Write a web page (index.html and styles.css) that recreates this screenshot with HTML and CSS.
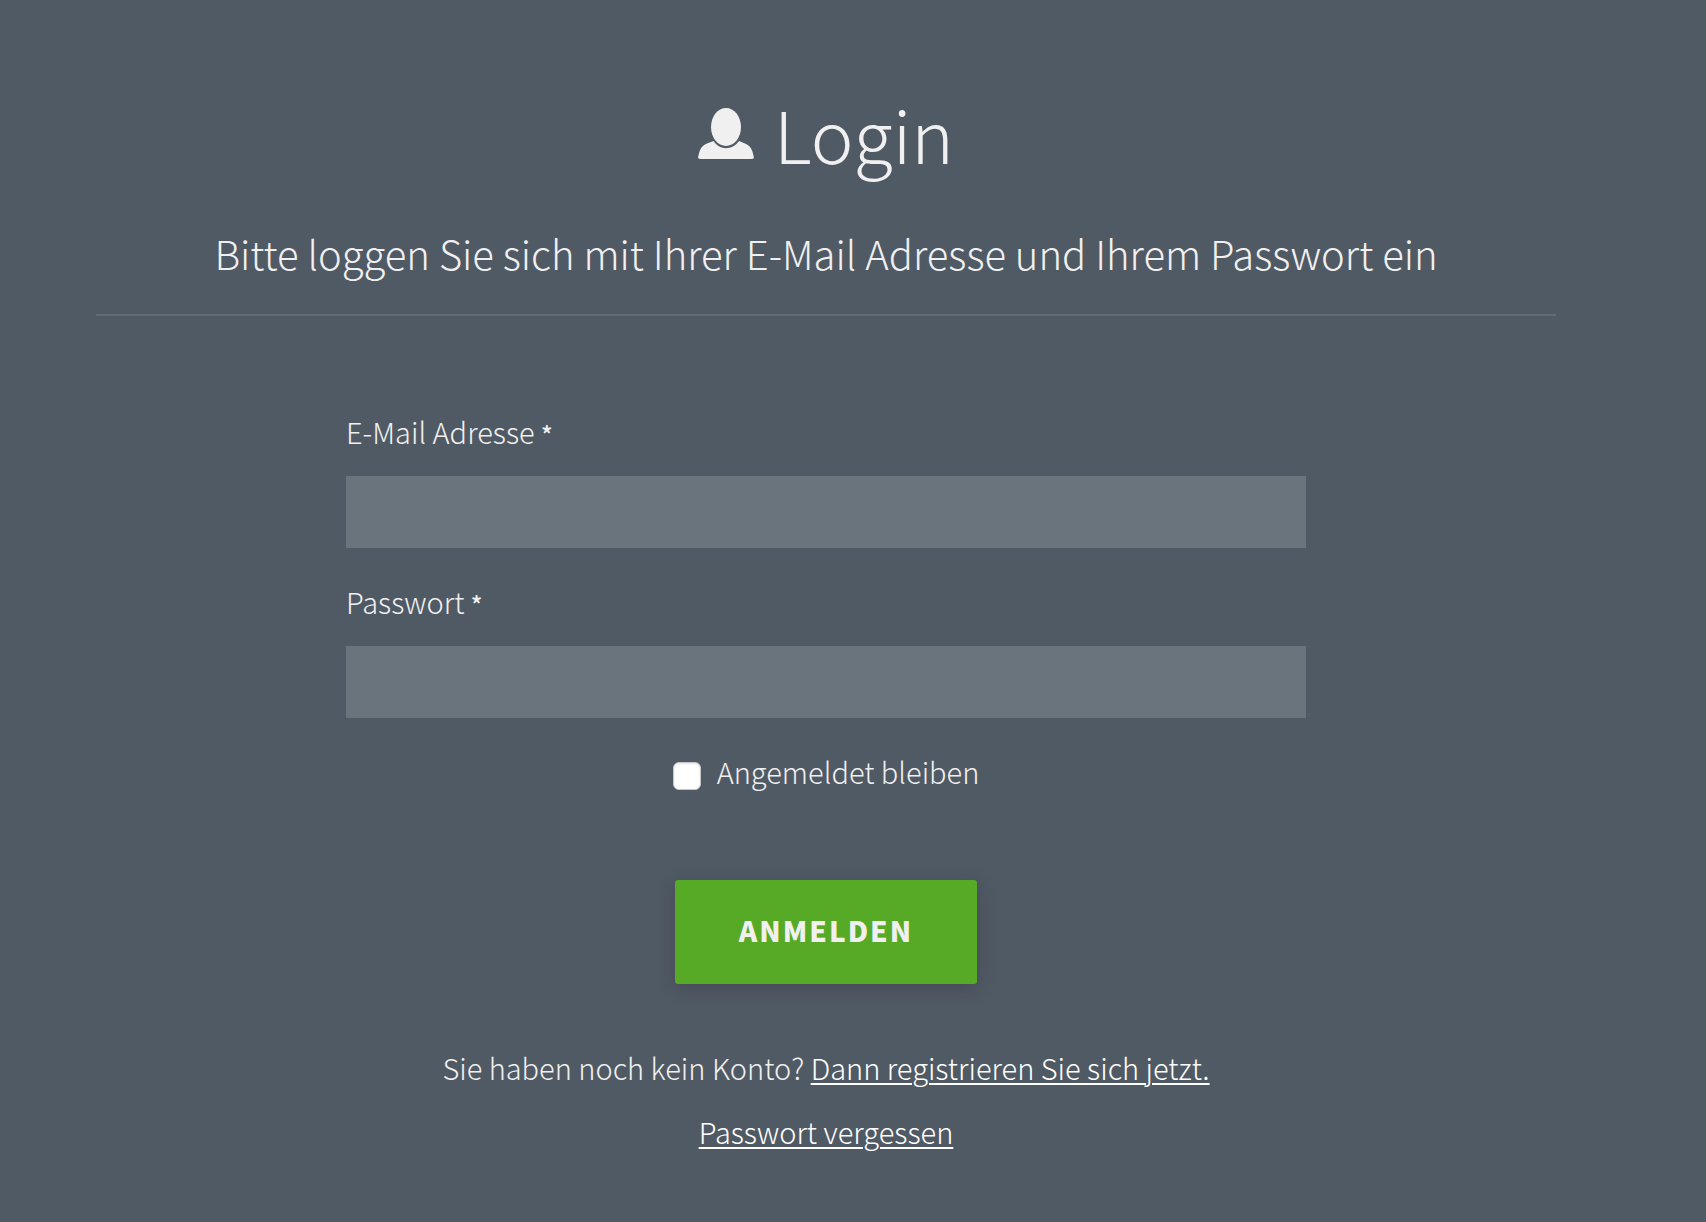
FILE: index.html
```html
<!DOCTYPE html>
<html lang="de">
<head>
<meta charset="utf-8">
<meta name="viewport" content="width=device-width, initial-scale=1">
<title>Login</title>
<link rel="stylesheet" href="styles.css">
</head>
<body>
<main class="page">
  <header class="intro">
    <h1 class="title">
      <svg class="user-icon" viewBox="0 0 56 52" aria-hidden="true">
        <ellipse cx="28" cy="19" rx="15" ry="19"/>
        <path d="M15.500 33C19 38 23.500 40.200 28 40.200S37.500 38 41 33L47 35.500C53 38 54.500 42 56 50Q55 51 53 51H3Q1 51 0 50C1.500 42 3 38 9 35.500Z"/>
      </svg>
      <span>Login</span>
    </h1>
    <p class="lead">Bitte loggen Sie sich mit Ihrer E-Mail Adresse und Ihrem Passwort ein</p>
  </header>
  <form class="form">
    <div class="field">
      <label for="email">E-Mail Adresse <span class="required">*</span></label>
      <input class="text-input" id="email" type="email" required>
    </div>
    <div class="field">
      <label for="password">Passwort <span class="required">*</span></label>
      <input class="text-input" id="password" type="password" required>
    </div>
    <div class="remember">
      <input class="check" id="remember" type="checkbox">
      <label for="remember">Angemeldet bleiben</label>
    </div>
    <button class="submit" type="submit">ANMELDEN</button>
    <p class="hint">Sie haben noch kein Konto? <a href="#registrieren">Dann registrieren Sie sich jetzt.</a></p>
    <p class="hint"><a href="#vergessen">Passwort vergessen</a></p>
  </form>
</main>
</body>
</html>
```
FILE: styles.css
```css
* {
  box-sizing: border-box;
}

body {
  margin: 0;
  background: #505a64;
  color: #f0f0f0;
  font-family: "Noto Sans CJK SC", "Open Sans", sans-serif;
  font-size: 29px;
  font-weight: 200;
  line-height: 64px;
}

.page {
  padding: 79px 150px 40px 96px;
}

.intro {
  border-bottom: 2px solid #636c76;
  padding-bottom: 29px;
  text-align: center;
}

.title {
  display: flex;
  justify-content: center;
  gap: 20px;
  margin: 0;
  font-size: 72px;
  font-weight: 200;
  line-height: 108px;
}

.user-icon {
  width: 56px;
  height: 52px;
  margin-top: 29px;
  fill: #f0f0f0;
}

.lead {
  margin: 34px 0 0;
  font-size: 40px;
  line-height: 64px;
}

.form {
  display: flex;
  flex-direction: column;
  align-items: center;
  max-width: 960px;
  margin: 83px auto 0;
}

.field {
  display: flex;
  flex-direction: column;
  width: 100%;
  margin-bottom: 21px;
}

.field label {
  margin-bottom: 13px;
}

.required {
  font-size: 24px;
  font-weight: 500;
  line-height: 1;
}

.text-input {
  width: 100%;
  height: 72px;
  border: 0;
  padding: 0 20px;
  background: #6a747d;
  color: inherit;
  font: inherit;
}

.remember {
  display: flex;
  align-items: center;
  gap: 16px;
}

.check {
  appearance: none;
  width: 28px;
  height: 28px;
  margin: 10px 0 0;
  border: 1px solid #c8c8c8;
  border-radius: 6px;
  background: #fff;
  box-shadow: inset 0 1px 2px #e4e4e4;
}

.check:checked {
  background: #57aa26;
}

.submit {
  height: 104px;
  margin: 77px 0 51px;
  border: 0;
  border-radius: 3px;
  padding: 0 64px 4px;
  background: #57aa26;
  box-shadow: 0 4px 16px rgba(50, 40, 60, 0.35);
  color: #f0f0f0;
  font: inherit;
  font-size: 28px;
  font-weight: 900;
  letter-spacing: 2px;
}

.hint {
  margin: 0;
}

a {
  color: #fff;
  text-decoration-thickness: 2px;
  text-underline-offset: 3px;
}
```
